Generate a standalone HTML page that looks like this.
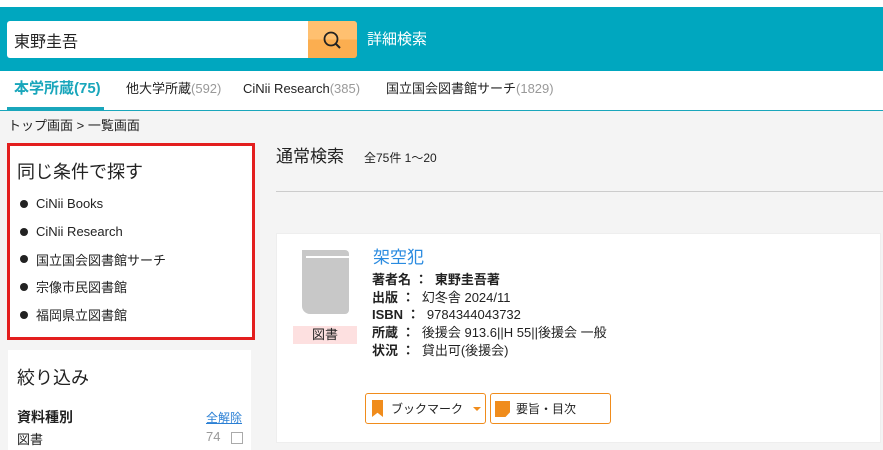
<!DOCTYPE html>
<html><head><meta charset="utf-8"><style>
*{margin:0;padding:0;box-sizing:border-box}
body{width:883px;height:443px;overflow:hidden;background:#f4f4f4;font-family:"Liberation Sans","Noto Sans CJK JP",sans-serif;color:#222;position:relative}
.a{position:absolute;white-space:nowrap}
.t{line-height:20px;height:20px}
.li{display:flex;align-items:center;height:27.7px}
.li i{display:inline-block;width:8px;height:8px;border-radius:50%;background:#222;margin:0 8px 0 2px}
</style></head><body>
<div class="a" style="left:0;top:0;width:883px;height:7px;background:#fff"></div>
<div class="a" style="left:0;top:7px;width:883px;height:64px;background:#00a7bf"></div>
<div class="a" style="left:7px;top:21px;width:302px;height:37px;background:#fff;border-radius:3px 0 0 3px"></div>
<div class="a" style="left:14px;top:28px;font-size:16px;color:#222">東野圭吾</div>
<div class="a" style="left:308px;top:21px;width:49px;height:37px;background:linear-gradient(#ffc070 50%,#fbae50 50%);border-radius:0 3px 3px 0"></div>
<svg class="a" style="left:322px;top:30px" width="22" height="22" viewBox="0 0 22 22"><circle cx="9" cy="9" r="6.5" fill="none" stroke="#222" stroke-width="1.8"/><line x1="13.5" y1="13.5" x2="18" y2="18" stroke="#222" stroke-width="2"/></svg>
<div class="a" style="left:367px;top:28px;font-size:15px;color:#fff">詳細検索</div>
<div class="a" style="left:0;top:71px;width:883px;height:40px;background:#fff;border-bottom:1px solid #19a6bb"></div>
<div class="a t" style="left:14px;top:79px;font-size:15px;font-weight:bold;color:#19a6bb">本学所蔵(75)</div>
<div class="a" style="left:7px;top:107px;width:97px;height:4px;background:#19a6bb"></div>
<div class="a t" style="left:126px;top:79px;font-size:13px">他大学所蔵<span style="color:#999">(592)</span></div>
<div class="a t" style="left:243px;top:79px;font-size:13px">CiNii Research<span style="color:#999">(385)</span></div>
<div class="a t" style="left:386px;top:79px;font-size:13px">国立国会図書館サーチ<span style="color:#999">(1829)</span></div>
<div class="a t" style="left:8px;top:116px;font-size:13px">トップ画面 &gt; 一覧画面</div>
<div class="a" style="left:7px;top:143px;width:248px;height:197px;background:#fff;border:3px solid #e31e1e"></div>
<div class="a" style="left:17px;top:158px;font-size:18px">同じ条件で探す</div>
<div class="a" style="left:18px;top:190px;font-size:13px">
<div class="li"><i></i>CiNii Books</div>
<div class="li"><i></i>CiNii Research</div>
<div class="li"><i></i>国立国会図書館サーチ</div>
<div class="li"><i></i>宗像市民図書館</div>
<div class="li"><i></i>福岡県立図書館</div>
</div>
<div class="a" style="left:8px;top:350px;width:243px;height:100px;background:#fff"></div>
<div class="a" style="left:17px;top:364px;font-size:18px">絞り込み</div>
<div class="a" style="left:17px;top:407px;font-size:14px;font-weight:bold">資料種別</div>
<div class="a" style="left:206px;top:409px;font-size:12px;color:#2a7fd4;text-decoration:underline">全解除</div>
<div class="a" style="left:17px;top:429px;font-size:13px">図書</div>
<div class="a" style="left:206px;top:429px;font-size:13px;color:#999">74</div>
<div class="a" style="left:231px;top:432px;width:12px;height:12px;border:1px solid #aaa"></div>
<div class="a" style="left:276px;top:145px;font-size:17px;line-height:24px">通常検索</div>
<div class="a" style="left:364px;top:149px;font-size:12px;line-height:18px">全75件 1～20</div>
<div class="a" style="left:276px;top:191px;width:607px;height:1px;background:#ccc"></div>
<div class="a" style="left:276px;top:233px;width:605px;height:210px;background:#fff;border:1px solid #eee"></div>
<div class="a" style="left:302px;top:250px;width:47px;height:64px;background:#c8c8c8;border-radius:0 4px 4px 8px"></div>
<div class="a" style="left:306px;top:256px;width:43px;height:2px;background:#fff"></div>
<div class="a" style="left:293px;top:326px;width:64px;height:18px;background:#fde0e0;font-size:13px;text-align:center;line-height:18px">図書</div>
<div class="a" style="left:373px;top:246px;font-size:17px;color:#2a8be0;line-height:24px">架空犯</div>
<div class="a" style="left:372px;top:271px;font-size:13px;line-height:17.7px"><b>著者名 ：&nbsp; 東野圭吾著</b><br><b>出版 ：</b>&nbsp; 幻冬舎 2024/11<br><b>ISBN ：</b>&nbsp; 9784344043732<br><b>所蔵 ：</b>&nbsp; 後援会 913.6||H 55||後援会 一般<br><b>状況 ：</b>&nbsp; 貸出可(後援会)</div>
<div class="a" style="left:365px;top:393px;width:121px;height:31px;border:1px solid #f08c1c;border-radius:3px;background:#fff"></div>
<div class="a" style="left:372px;top:400px;width:11px;height:17px;background:#f08c1c;clip-path:polygon(0 0,100% 0,100% 100%,50% 75%,0 100%)"></div>
<div class="a" style="left:391px;top:400px;font-size:12px">ブックマーク</div>
<div class="a" style="left:473px;top:407px;width:0;height:0;border-left:4px solid transparent;border-right:4px solid transparent;border-top:4px solid #f08c1c"></div>
<div class="a" style="left:490px;top:393px;width:121px;height:31px;border:1px solid #f08c1c;border-radius:3px;background:#fff"></div>
<div class="a" style="left:495px;top:401px;width:15px;height:16px;background:#f08c1c;clip-path:polygon(0 0,100% 0,100% 70%,70% 100%,0 100%)"></div>
<div class="a" style="left:516px;top:400px;font-size:12px">要旨・目次</div>
</body></html>
